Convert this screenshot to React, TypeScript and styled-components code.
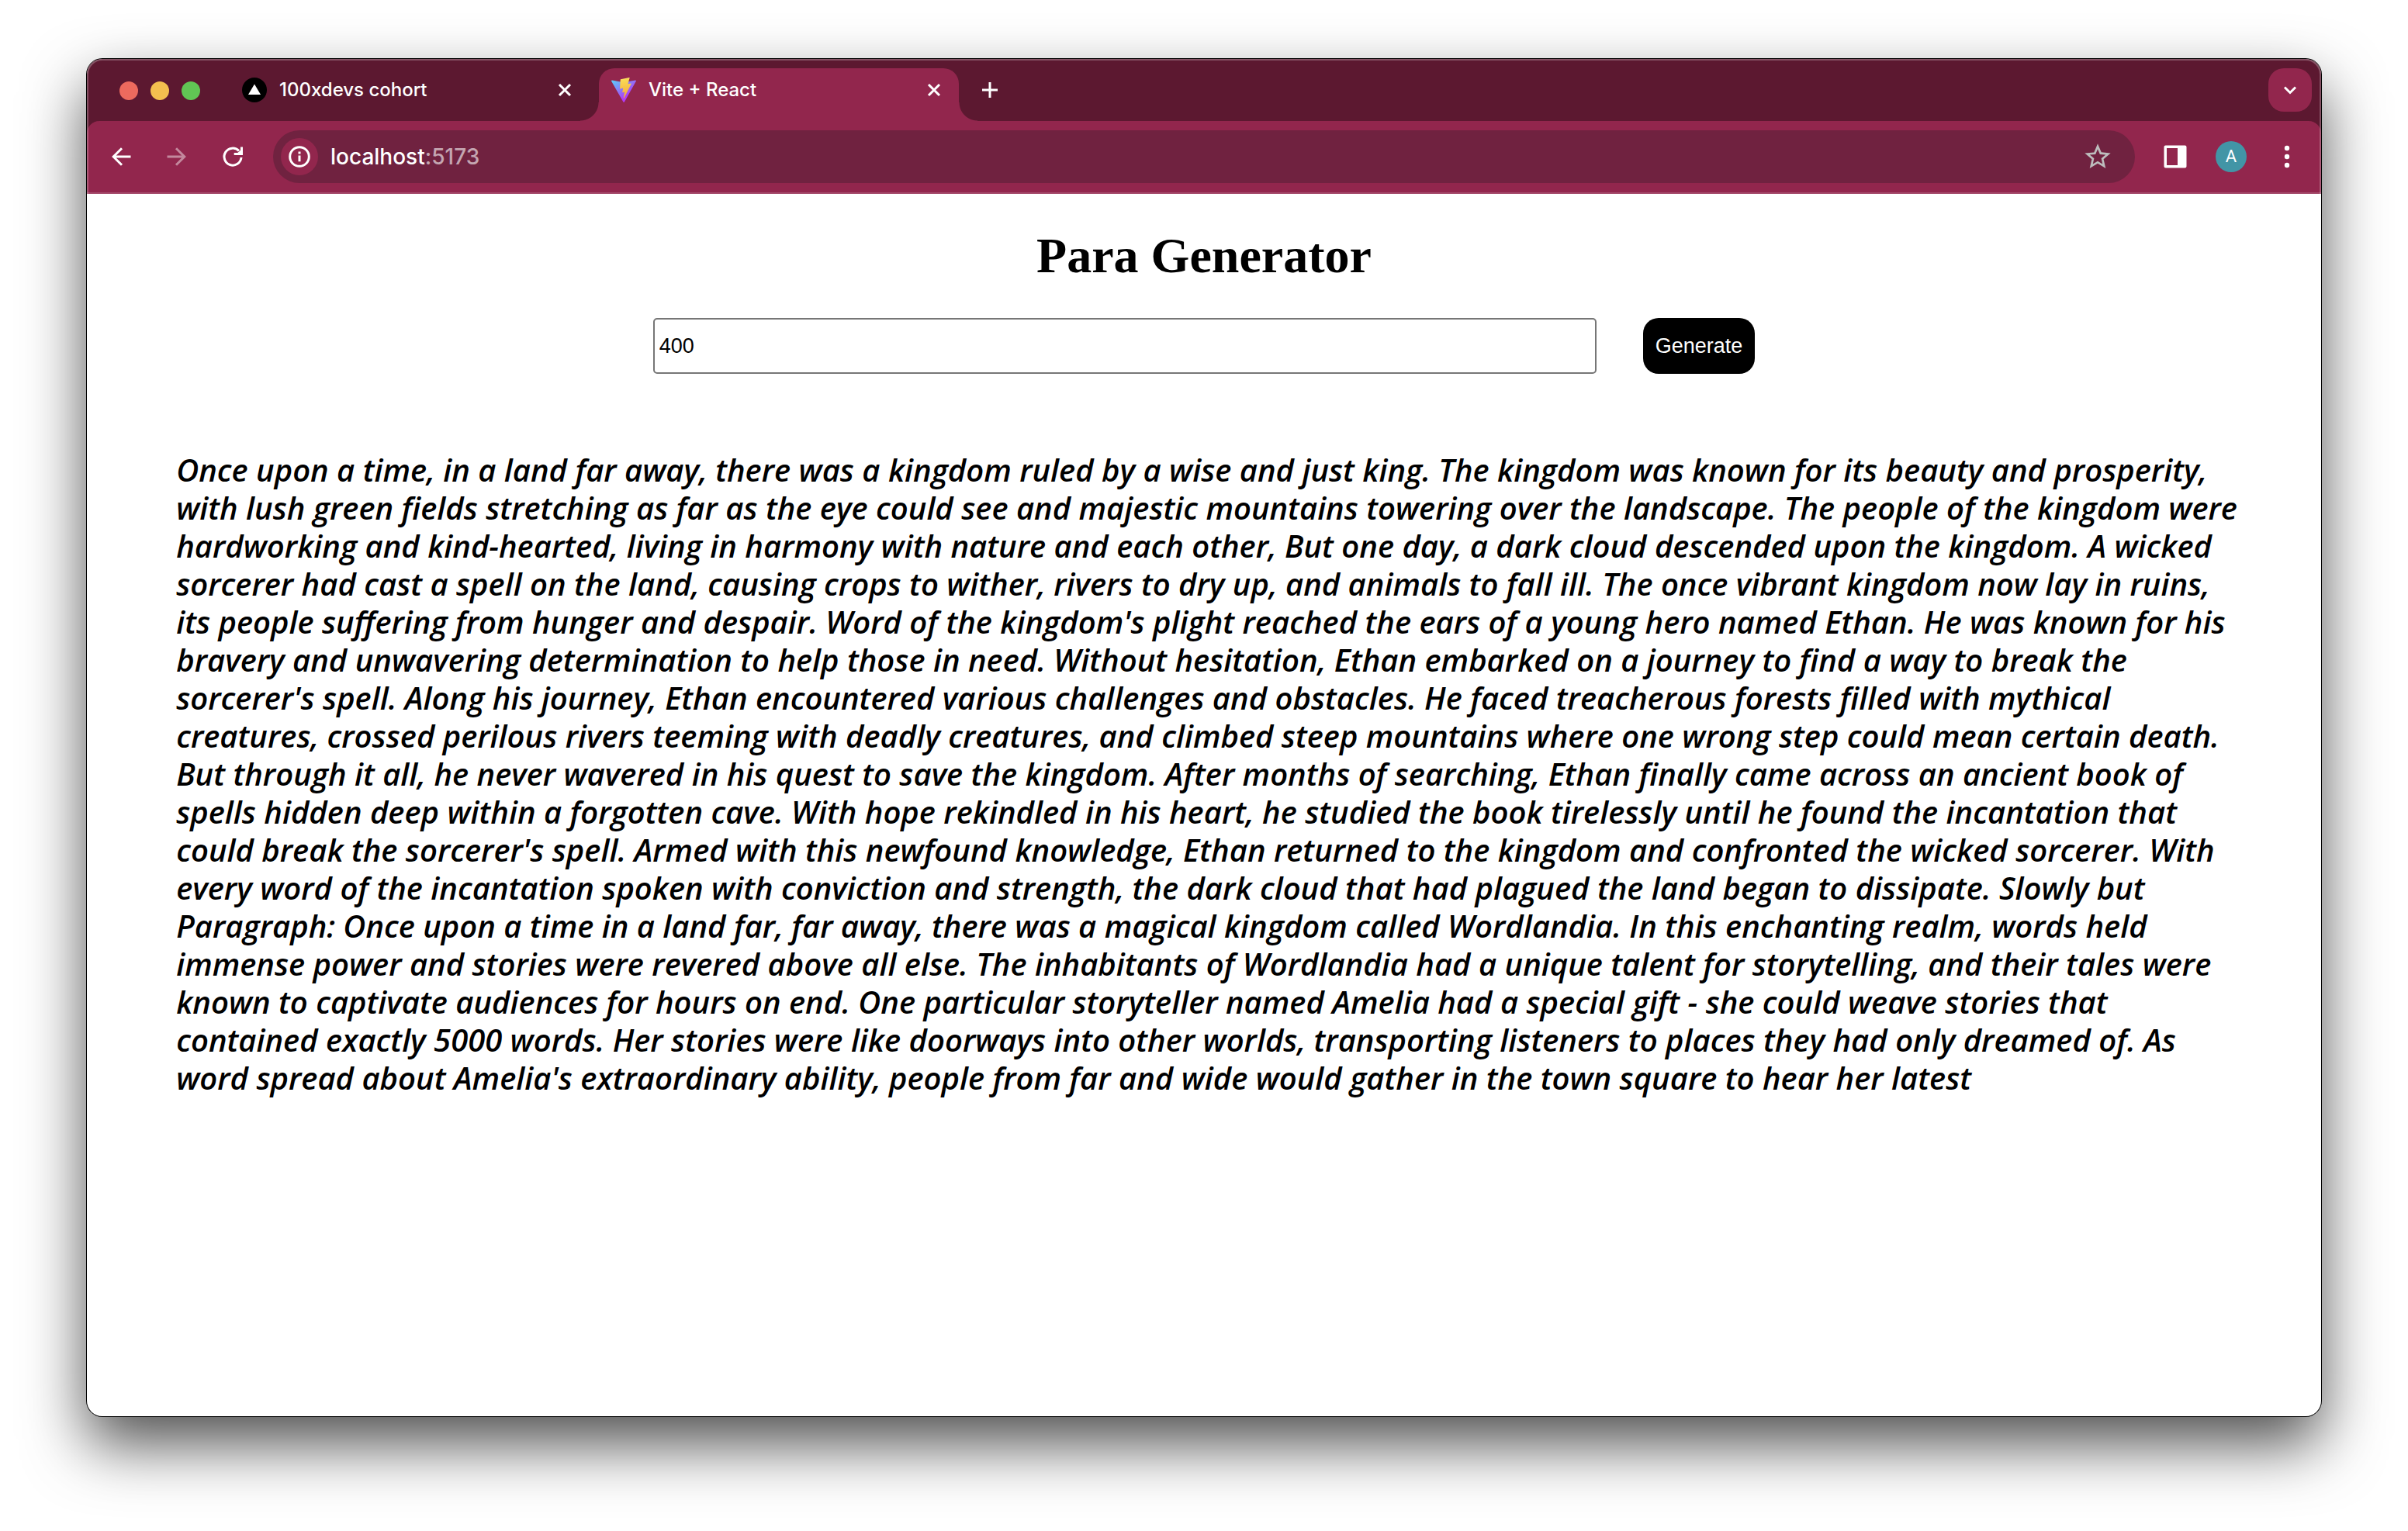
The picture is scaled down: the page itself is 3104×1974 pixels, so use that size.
import React, { useState } from "react";
import styled, { createGlobalStyle, css } from "styled-components";

const color = {
  strip: "#5c1830",
  toolbar: "#92264d",
  field: "#702240",
  ui: "#ffffff",
};

const GlobalStyle = createGlobalStyle`
  *, *::before, *::after { box-sizing: border-box; }
  body { margin: 0; background: #fff; }
  button, input { font: inherit; margin: 0; }
  svg { display: block; }
`;

const Desktop = styled.div`
  display: flex;
  min-height: 100vh;
  padding: 76px 112px 148px;
  background: #fff;
`;

const BrowserWindow = styled.div`
  position: relative;
  flex: 1;
  min-width: 0;
  display: flex;
  flex-direction: column;
  overflow: hidden;
  border-radius: 20px;
  background: #fff;
  box-shadow: 0 0 0 1px #000, 0 36px 80px rgba(0, 0, 0, 0.69);

  &::after {
    content: "";
    position: absolute;
    inset: 0;
    border-radius: inherit;
    box-shadow: inset 0 0 0 2px rgba(255, 255, 255, 0.25);
    pointer-events: none;
  }
`;

const Chrome = styled.header`
  background: ${color.strip};
  color: ${color.ui};
  font-family: Inter, "Liberation Sans", sans-serif;
  font-weight: 500;
`;

const TabStrip = styled.div`
  display: flex;
  gap: 12px;
  height: 80px;
  padding: 12px 12px 0 42px;
`;

const TrafficLights = styled.div`
  display: flex;
  align-items: center;
  gap: 16px;
  height: 58px;
  margin-right: 26px;
`;

const Light = styled.button<{ $fill: string }>`
  width: 24px;
  height: 24px;
  padding: 0;
  border: 0;
  border-radius: 50%;
  background: ${(p) => p.$fill};
`;

const Tab = styled.div<{ $active?: boolean }>`
  position: relative;
  display: flex;
  align-items: center;
  gap: 16px;
  width: 464px;
  padding: 0 16px 12px;
  border-radius: 20px 20px 0 0;
  font-size: 24px;
  line-height: 32px;

  ${(p) =>
    p.$active &&
    css`
      background: ${color.toolbar};

      &::before,
      &::after {
        content: "";
        position: absolute;
        bottom: 0;
        width: 24px;
        height: 24px;
      }
      &::before {
        right: 100%;
        background: radial-gradient(circle at 0 0, transparent 23px, ${color.toolbar} 24px);
      }
      &::after {
        left: 100%;
        background: radial-gradient(circle at 100% 0, transparent 23px, ${color.toolbar} 24px);
      }
    `}
`;

const TabTitle = styled.span`
  flex: 1;
  white-space: nowrap;
`;

const IconButton = styled.button<{ $size: number; $filled?: boolean; $dim?: boolean }>`
  flex: none;
  display: grid;
  place-items: center;
  width: ${(p) => p.$size}px;
  height: ${(p) => p.$size}px;
  padding: 0;
  border: 0;
  border-radius: 20px;
  background: ${(p) => (p.$filled ? color.toolbar : "transparent")};
  color: inherit;
  opacity: ${(p) => (p.$dim ? 0.45 : 1)};
`;

const Spacer = styled.div`
  flex: 1;
`;

const Toolbar = styled.div`
  display: flex;
  align-items: center;
  height: 94px;
  padding: 0 20px 2px 8px;
  border-radius: 16px 16px 0 0;
  background: ${color.toolbar};
  box-shadow: inset 0 -2px 0 rgba(255, 255, 255, 0.18);
`;

const NavButtons = styled.nav`
  display: flex;
  gap: 16px;
  padding: 0 24px 0 8px;
`;

const AddressBar = styled.div`
  flex: 1;
  display: flex;
  align-items: center;
  gap: 16px;
  height: 68px;
  padding: 0 24px 0 10px;
  border-radius: 34px;
  background: ${color.field};
  font-size: 28px;
  line-height: 36px;
`;

const SiteInfo = styled.button`
  display: grid;
  place-items: center;
  width: 48px;
  height: 48px;
  padding: 0;
  border: 0;
  border-radius: 50%;
  background: ${color.toolbar};
  color: inherit;
`;

const Address = styled.span`
  flex: 1;
`;

const Port = styled.span`
  color: rgba(255, 255, 255, 0.6);
`;

const ToolbarActions = styled.div`
  display: flex;
  align-items: center;
  gap: 24px;
  padding-left: 28px;
`;

const Avatar = styled.button`
  width: 40px;
  height: 40px;
  margin: 0 4px;
  padding: 0;
  border: 0;
  border-radius: 50%;
  background: #4295a6;
  color: #fff;
  font: 400 22px/40px Roboto, "Liberation Sans", sans-serif;
`;

const Page = styled.main`
  padding: 43px 4% 0;
  color: #000;
`;

const Title = styled.h1`
  margin: 0 0 43px;
  font: bold 64px/74px "Liberation Serif", "Times New Roman", serif;
  text-align: center;
`;

const Form = styled.form`
  display: flex;
  justify-content: center;
  gap: 60px;
  font: 27px/31px "Liberation Sans", Arial, sans-serif;
`;

const WordCount = styled.input`
  width: 1216px;
  height: 72px;
  padding: 2px 6px;
  border: 2px solid #767676;
  border-radius: 5px;
  background: #fff;
  color: #000;
`;

const Generate = styled.button`
  height: 72px;
  padding: 0 16px;
  border: 0;
  border-radius: 20px;
  background: #000;
  color: #fff;
`;

const Story = styled.p`
  margin: 99px 0 0;
  font: italic 600 40px/49px "Open Sans", "Noto Sans", sans-serif;
  white-space: nowrap;
`;

const Line = styled.span`
  display: block;
`;

const story = [
  "Once upon a time, in a land far away, there was a kingdom ruled by a wise and just king. The kingdom was known for its beauty and prosperity,",
  "with lush green fields stretching as far as the eye could see and majestic mountains towering over the landscape. The people of the kingdom were",
  "hardworking and kind-hearted, living in harmony with nature and each other, But one day, a dark cloud descended upon the kingdom. A wicked",
  "sorcerer had cast a spell on the land, causing crops to wither, rivers to dry up, and animals to fall ill. The once vibrant kingdom now lay in ruins,",
  "its people suffering from hunger and despair. Word of the kingdom's plight reached the ears of a young hero named Ethan. He was known for his",
  "bravery and unwavering determination to help those in need. Without hesitation, Ethan embarked on a journey to find a way to break the",
  "sorcerer's spell. Along his journey, Ethan encountered various challenges and obstacles. He faced treacherous forests filled with mythical",
  "creatures, crossed perilous rivers teeming with deadly creatures, and climbed steep mountains where one wrong step could mean certain death.",
  "But through it all, he never wavered in his quest to save the kingdom. After months of searching, Ethan finally came across an ancient book of",
  "spells hidden deep within a forgotten cave. With hope rekindled in his heart, he studied the book tirelessly until he found the incantation that",
  "could break the sorcerer's spell. Armed with this newfound knowledge, Ethan returned to the kingdom and confronted the wicked sorcerer. With",
  "every word of the incantation spoken with conviction and strength, the dark cloud that had plagued the land began to dissipate. Slowly but",
  "Paragraph: Once upon a time in a land far, far away, there was a magical kingdom called Wordlandia. In this enchanting realm, words held",
  "immense power and stories were revered above all else. The inhabitants of Wordlandia had a unique talent for storytelling, and their tales were",
  "known to captivate audiences for hours on end. One particular storyteller named Amelia had a special gift - she could weave stories that",
  "contained exactly 5000 words. Her stories were like doorways into other worlds, transporting listeners to places they had only dreamed of. As",
  "word spread about Amelia's extraordinary ability, people from far and wide would gather in the town square to hear her latest",
];

const VercelIcon = () => (
  <svg width="32" height="32" viewBox="0 0 32 32" aria-hidden="true">
    <circle cx="16" cy="16" r="16" fill="#000" />
    <path d="M16 8.5 24 22H8z" fill="#fff" />
  </svg>
);

const ViteIcon = () => (
  <svg width="32" height="32" viewBox="0 0 256 257" aria-hidden="true">
    <defs>
      <linearGradient id="viteBody" x1="-.828%" x2="57.636%" y1="7.652%" y2="78.411%">
        <stop offset="0%" stopColor="#5cc8fa" />
        <stop offset="100%" stopColor="#b13bf5" />
      </linearGradient>
      <linearGradient id="viteBolt" x1="43.376%" x2="50.316%" y1="2.242%" y2="89.03%">
        <stop offset="0%" stopColor="#fbe472" />
        <stop offset="8.333%" stopColor="#f9da55" />
        <stop offset="100%" stopColor="#f3ac3d" />
      </linearGradient>
    </defs>
    <path
      fill="url(#viteBody)"
      d="M255.153 37.938L134.897 252.976c-2.483 4.44-8.862 4.466-11.382.048L.875 37.958c-2.746-4.814 1.371-10.646 6.827-9.67l120.385 21.517a6.537 6.537 0 0 0 2.322-.004l117.867-21.483c5.438-.991 9.574 4.796 6.877 9.62Z"
    />
    <path
      fill="url(#viteBolt)"
      d="M185.432.063L96.44 17.501a3.268 3.268 0 0 0-2.634 3.014l-5.474 92.456a3.268 3.268 0 0 0 3.997 3.378l24.777-5.718c2.318-.535 4.413 1.507 3.936 3.838l-7.361 36.047c-.495 2.426 1.782 4.5 4.151 3.78l15.304-4.649c2.372-.72 4.652 1.36 4.15 3.788l-11.698 56.621c-.732 3.542 3.979 5.473 5.943 2.437l1.313-2.028l72.516-144.72c1.215-2.423-.88-5.186-3.54-4.672l-25.505 4.922c-2.396.462-4.435-1.77-3.759-4.114l16.646-57.705c.677-2.35-1.37-4.583-3.769-4.113Z"
    />
  </svg>
);

const Stroke = ({ d }: { d: string }) => (
  <svg width="32" height="32" viewBox="0 0 32 32" fill="none" stroke="currentColor" strokeWidth="3" aria-hidden="true">
    <path d={d} />
  </svg>
);

const CloseIcon = () => <Stroke d="M9 9l14 14M23 9L9 23" />;

export default function App() {
  const [count, setCount] = useState("400");

  return (
    <>
      <GlobalStyle />
      <Desktop>
        <BrowserWindow>
          <Chrome>
            <TabStrip>
              <TrafficLights>
                <Light $fill="#ec6a5e" aria-label="Close window" />
                <Light $fill="#f4bf4f" aria-label="Minimise window" />
                <Light $fill="#61c554" aria-label="Zoom window" />
              </TrafficLights>
              <Tab>
                <VercelIcon />
                <TabTitle>100xdevs cohort</TabTitle>
                <IconButton $size={32} aria-label="Close tab">
                  <CloseIcon />
                </IconButton>
              </Tab>
              <Tab $active>
                <ViteIcon />
                <TabTitle>Vite + React</TabTitle>
                <IconButton $size={32} aria-label="Close tab">
                  <CloseIcon />
                </IconButton>
              </Tab>
              <IconButton $size={56} aria-label="New tab">
                <Stroke d="M16 6v20M6 16h20" />
              </IconButton>
              <Spacer />
              <IconButton $size={56} $filled aria-label="Search tabs">
                <Stroke d="M9 12.5l7 7 7-7" />
              </IconButton>
            </TabStrip>
            <Toolbar>
              <NavButtons>
                <IconButton $size={56} aria-label="Back">
                  <Stroke d="M28.5 16H6.500M17 5.200L6.200 16l10.800 10.800" />
                </IconButton>
                <IconButton $size={56} $dim aria-label="Forward">
                  <Stroke d="M3.500 16H25.500M15 5.200L25.800 16 15 26.800" />
                </IconButton>
                <IconButton $size={56} aria-label="Reload">
                  <svg width="32" height="32" viewBox="0 0 32 32" fill="none" stroke="currentColor" strokeWidth="3" aria-hidden="true">
                    <path d="M27 17A11 11 0 1 1 24 8.500" />
                    <path d="M27.500 3.500v9H17.700" />
                    <path d="M28 6v7h-8z" fill="currentColor" stroke="none" />
                  </svg>
                </IconButton>
              </NavButtons>
              <AddressBar>
                <SiteInfo aria-label="View site information">
                  <svg width="28" height="28" viewBox="0 0 28 28" fill="none" stroke="currentColor" aria-hidden="true">
                    <circle cx="14" cy="14" r="12.300" strokeWidth="3" />
                    <path d="M14 12.500V20.300M14 7.600v2.800" strokeWidth="3" />
                  </svg>
                </SiteInfo>
                <Address>
                  localhost<Port>:5173</Port>
                </Address>
                <IconButton $size={48} aria-label="Bookmark this tab">
                  <svg width="40" height="40" viewBox="0 0 24 24" fill="#bdbdbd" aria-hidden="true">
                    <path d="M22 9.240l-7.190-.62L12 2 9.190 8.630 2 9.240l5.460 4.730L5.820 21 12 17.270 18.180 21l-1.630-7.030L22 9.240zM12 15.400l-3.760 2.270 1-4.280-3.320-2.880 4.380-.38L12 6.100l1.710 4.040 4.380.38-3.320 2.880 1 4.280L12 15.400z" />
                  </svg>
                </IconButton>
              </AddressBar>
              <ToolbarActions>
                <IconButton $size={48} aria-label="Side panel">
                  <svg width="30" height="30" viewBox="0 0 30 30" fill="currentColor" fillRule="evenodd" aria-hidden="true">
                    <path d="M2.500 0.500h25a2 2 0 0 1 2 2v25a2 2 0 0 1-2 2h-25a2 2 0 0 1-2-2v-25a2 2 0 0 1 2-2zM4 4v22h14V4z" />
                  </svg>
                </IconButton>
                <Avatar aria-label="Profile A">A</Avatar>
                <IconButton $size={48} aria-label="Menu">
                  <svg width="32" height="32" viewBox="0 0 32 32" fill="currentColor" aria-hidden="true">
                    <circle cx="16" cy="5" r="3.200" />
                    <circle cx="16" cy="16" r="3.200" />
                    <circle cx="16" cy="27" r="3.200" />
                  </svg>
                </IconButton>
              </ToolbarActions>
            </Toolbar>
          </Chrome>
          <Page>
            <Title>Para Generator</Title>
            <Form onSubmit={(e) => e.preventDefault()}>
              <WordCount aria-label="Number of words" value={count} onChange={(e) => setCount(e.target.value)} />
              <Generate type="submit">Generate</Generate>
            </Form>
            <Story>
              {story.map((text) => (
                <Line key={text}>{text} </Line>
              ))}
            </Story>
          </Page>
        </BrowserWindow>
      </Desktop>
    </>
  );
}
